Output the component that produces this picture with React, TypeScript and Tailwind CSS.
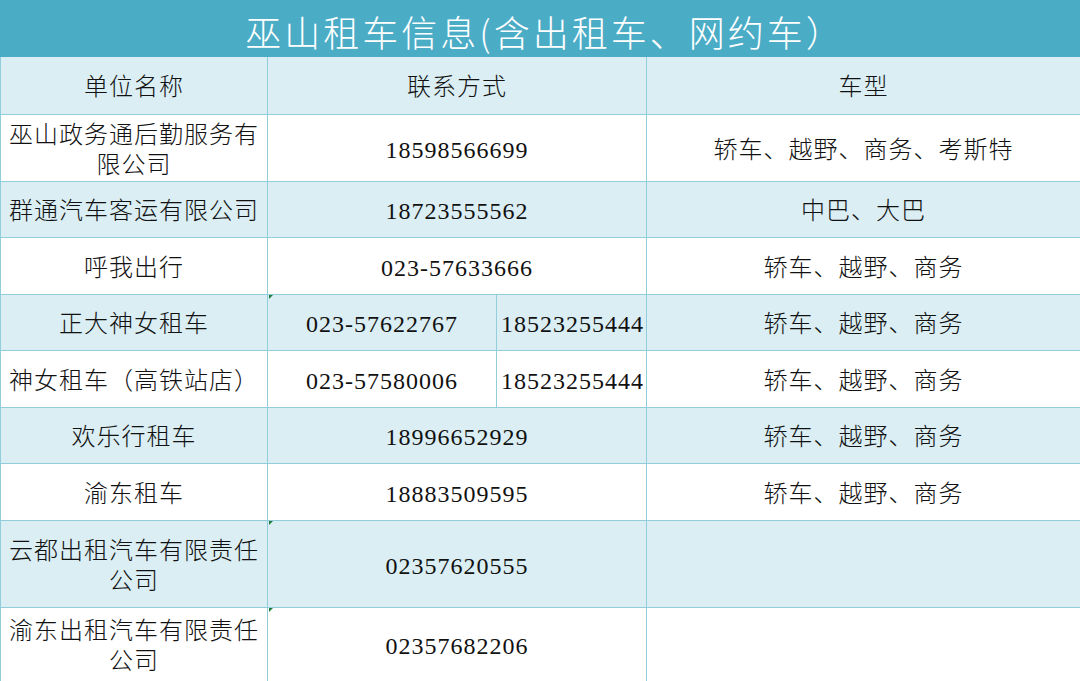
import React from "react";

type Row = {
  name: string[];
  phone?: string;
  phones?: [string, string];
  type: string;
  h: number;
  blue: boolean;
  mark?: boolean;
};

const rows: Row[] = [
  { name: ["巫山政务通后勤服务有", "限公司"], phone: "18598566699", type: "轿车、越野、商务、考斯特", h: 67, blue: false },
  { name: ["群通汽车客运有限公司"], phone: "18723555562", type: "中巴、大巴", h: 56, blue: true },
  { name: ["呼我出行"], phone: "023-57633666", type: "轿车、越野、商务", h: 57, blue: false },
  { name: ["正大神女租车"], phones: ["023-57622767", "18523255444"], type: "轿车、越野、商务", h: 56, blue: true, mark: true },
  { name: ["神女租车（高铁站店）"], phones: ["023-57580006", "18523255444"], type: "轿车、越野、商务", h: 57, blue: false },
  { name: ["欢乐行租车"], phone: "18996652929", type: "轿车、越野、商务", h: 56, blue: true },
  { name: ["渝东租车"], phone: "18883509595", type: "轿车、越野、商务", h: 57, blue: false },
  { name: ["云都出租汽车有限责任", "公司"], phone: "02357620555", type: "", h: 87, blue: true, mark: true },
  { name: ["渝东出租汽车有限责任", "公司"], phone: "02357682206", type: "", h: 74, blue: false, mark: true },
];

const font = {
  fontFamily: '"Liberation Serif", "Noto Sans CJK SC", serif',
};

export default function App() {
  const base =
    "border border-[#92cddc] text-center align-middle pt-[4px] pb-0 px-1 tracking-[1px] text-[24px] leading-[30px] text-[#111]";
  const td = base + " font-light";
  const num = base + " font-normal text-[#1a1a1a]";
  return (
    <div className="w-[1080px] h-[681px] bg-white overflow-hidden" style={font}>
      <div className="h-[57px] bg-[#4bacc6] flex items-center justify-center">
        <span
          className="text-white text-[36px] tracking-[3px] leading-none pl-[10px] pt-[4px] font-light"
          style={{ fontFamily: '"Noto Sans CJK SC", sans-serif' }}
        >
          巫山租车信息(含出租车、网约车）
        </span>
      </div>
      <table className="w-[1080px] border-collapse table-fixed">
        <colgroup>
          <col className="w-[267px]" />
          <col className="w-[229px]" />
          <col className="w-[150px]" />
          <col className="w-[434px]" />
        </colgroup>
        <tbody>
          <tr className="h-[57px] bg-[#daeef3]">
            <td className={td + " border-t-0"}>单位名称</td>
            <td className={td + " border-t-0"} colSpan={2}>联系方式</td>
            <td className={td + " border-t-0"}>车型</td>
          </tr>
          {rows.map((r, i) => (
            <tr key={i} className={r.blue ? "bg-[#daeef3]" : "bg-white"} style={{ height: r.h }}>
              <td className={td + " relative"}>
                {r.name.map((n, j) => (
                  <div key={j}>{n}</div>
                ))}
                {r.mark && (
                  <span className="absolute right-[-2px] top-0 w-0 h-0 border-t-[4px] border-t-[#1f7a3a] border-r-[4px] border-r-transparent translate-x-full" />
                )}
              </td>
              {r.phones ? (
                <>
                  <td className={num}>{r.phones[0]}</td>
                  <td className={num + " tracking-[0.5px] px-0"}>{r.phones[1]}</td>
                </>
              ) : (
                <td className={num} colSpan={2}>{r.phone}</td>
              )}
              <td className={td}>{r.type}</td>
            </tr>
          ))}
        </tbody>
      </table>
    </div>
  );
}
